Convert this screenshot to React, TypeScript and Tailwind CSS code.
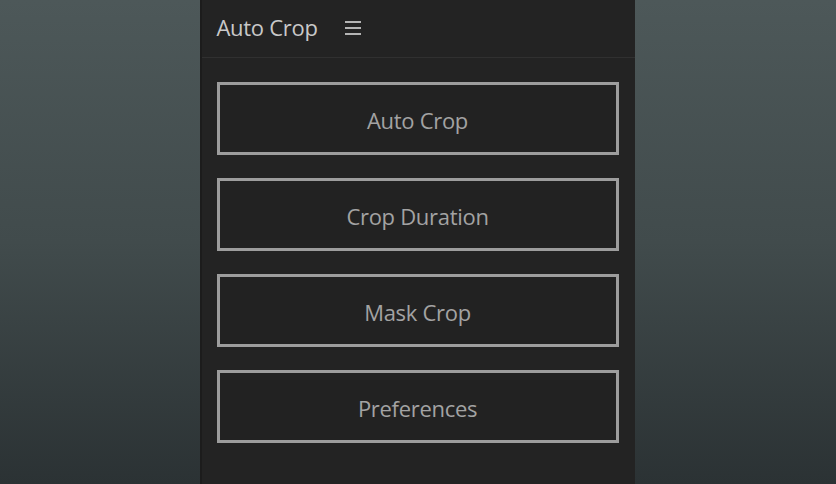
import React from "react";

const items = ["Auto Crop", "Crop Duration", "Mask Crop", "Preferences"];

const App = () => {
  return (
    <div className="flex h-[484px] w-full justify-center overflow-hidden bg-gradient-to-b from-[#4d5859] via-[#414b4c] to-[#2b3234] font-['Open_Sans',sans-serif]">
      <div className="mr-[2px] flex w-[435px] flex-col border-l-2 border-[#1c1c1c] bg-[#232323]">
        <div className="flex h-[58px] items-center gap-[27px] border-b border-[#303030] pl-[15px] pb-[2px]">
          <span className="text-[22px] tracking-[-0.3px] text-[#c9c9c9]">Auto Crop</span>
          <svg width="16" height="14" viewBox="0 0 16 14" className="mt-[1px]">
            <rect x="0" y="0" width="16" height="2" fill="#b4b4b4" />
            <rect x="0" y="6" width="16" height="2" fill="#b4b4b4" />
            <rect x="0" y="12" width="16" height="2" fill="#b4b4b4" />
          </svg>
        </div>
        <div className="flex flex-col gap-[23px] pl-[15px] pr-[16px] pt-[24px]">
          {items.map((label) => (
            <button
              key={label}
              className="flex h-[73px] w-full items-center justify-center border-[3px] border-[#9d9d9d] bg-[#222222] pt-[4px] text-[22px] tracking-[-0.3px] text-[#a3a3a3]"
            >
              {label}
            </button>
          ))}
        </div>
      </div>
    </div>
  );
};

export default App;
